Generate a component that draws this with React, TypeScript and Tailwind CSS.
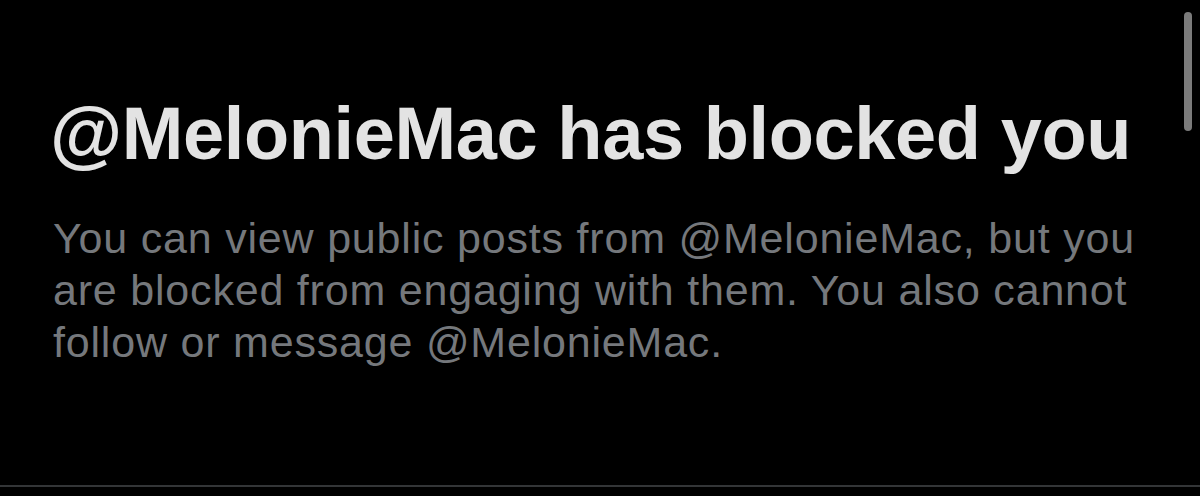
import type { ReactNode } from "react";

const handle = "@MelonieMac";

function ScrollThumb() {
  return <div className="absolute right-[8px] top-[12px] h-[119px] w-[8px] rounded-full bg-[#7b7b7b]" />;
}

function Line({ children }: { children: ReactNode }) {
  return <span className="block whitespace-nowrap">{children}</span>;
}

export default function App() {
  return (
    <main className="relative flex h-[496px] w-full flex-col overflow-hidden bg-black font-['Liberation_Sans',Arial,sans-serif]">
      <ScrollThumb />

      <section className="flex flex-1 flex-col pl-[50px] pt-[90px]">
        <h1 className="whitespace-nowrap text-[74px] font-bold leading-[1.2] tracking-[-0.4px] text-[#e3e3e3]">
          {handle} has blocked you
        </h1>

        <p className="mt-[33px] pl-[3px] text-[43px] leading-[52px] tracking-[0.8px] text-[#75787c]">
          <Line>You can view public posts from {handle}, but you</Line>
          <Line>are blocked from engaging with them. You also cannot</Line>
          <Line>follow or message {handle}.</Line>
        </p>
      </section>

      <div className="mb-[9px] h-[2px] w-full bg-[#333537]" />
    </main>
  );
}
